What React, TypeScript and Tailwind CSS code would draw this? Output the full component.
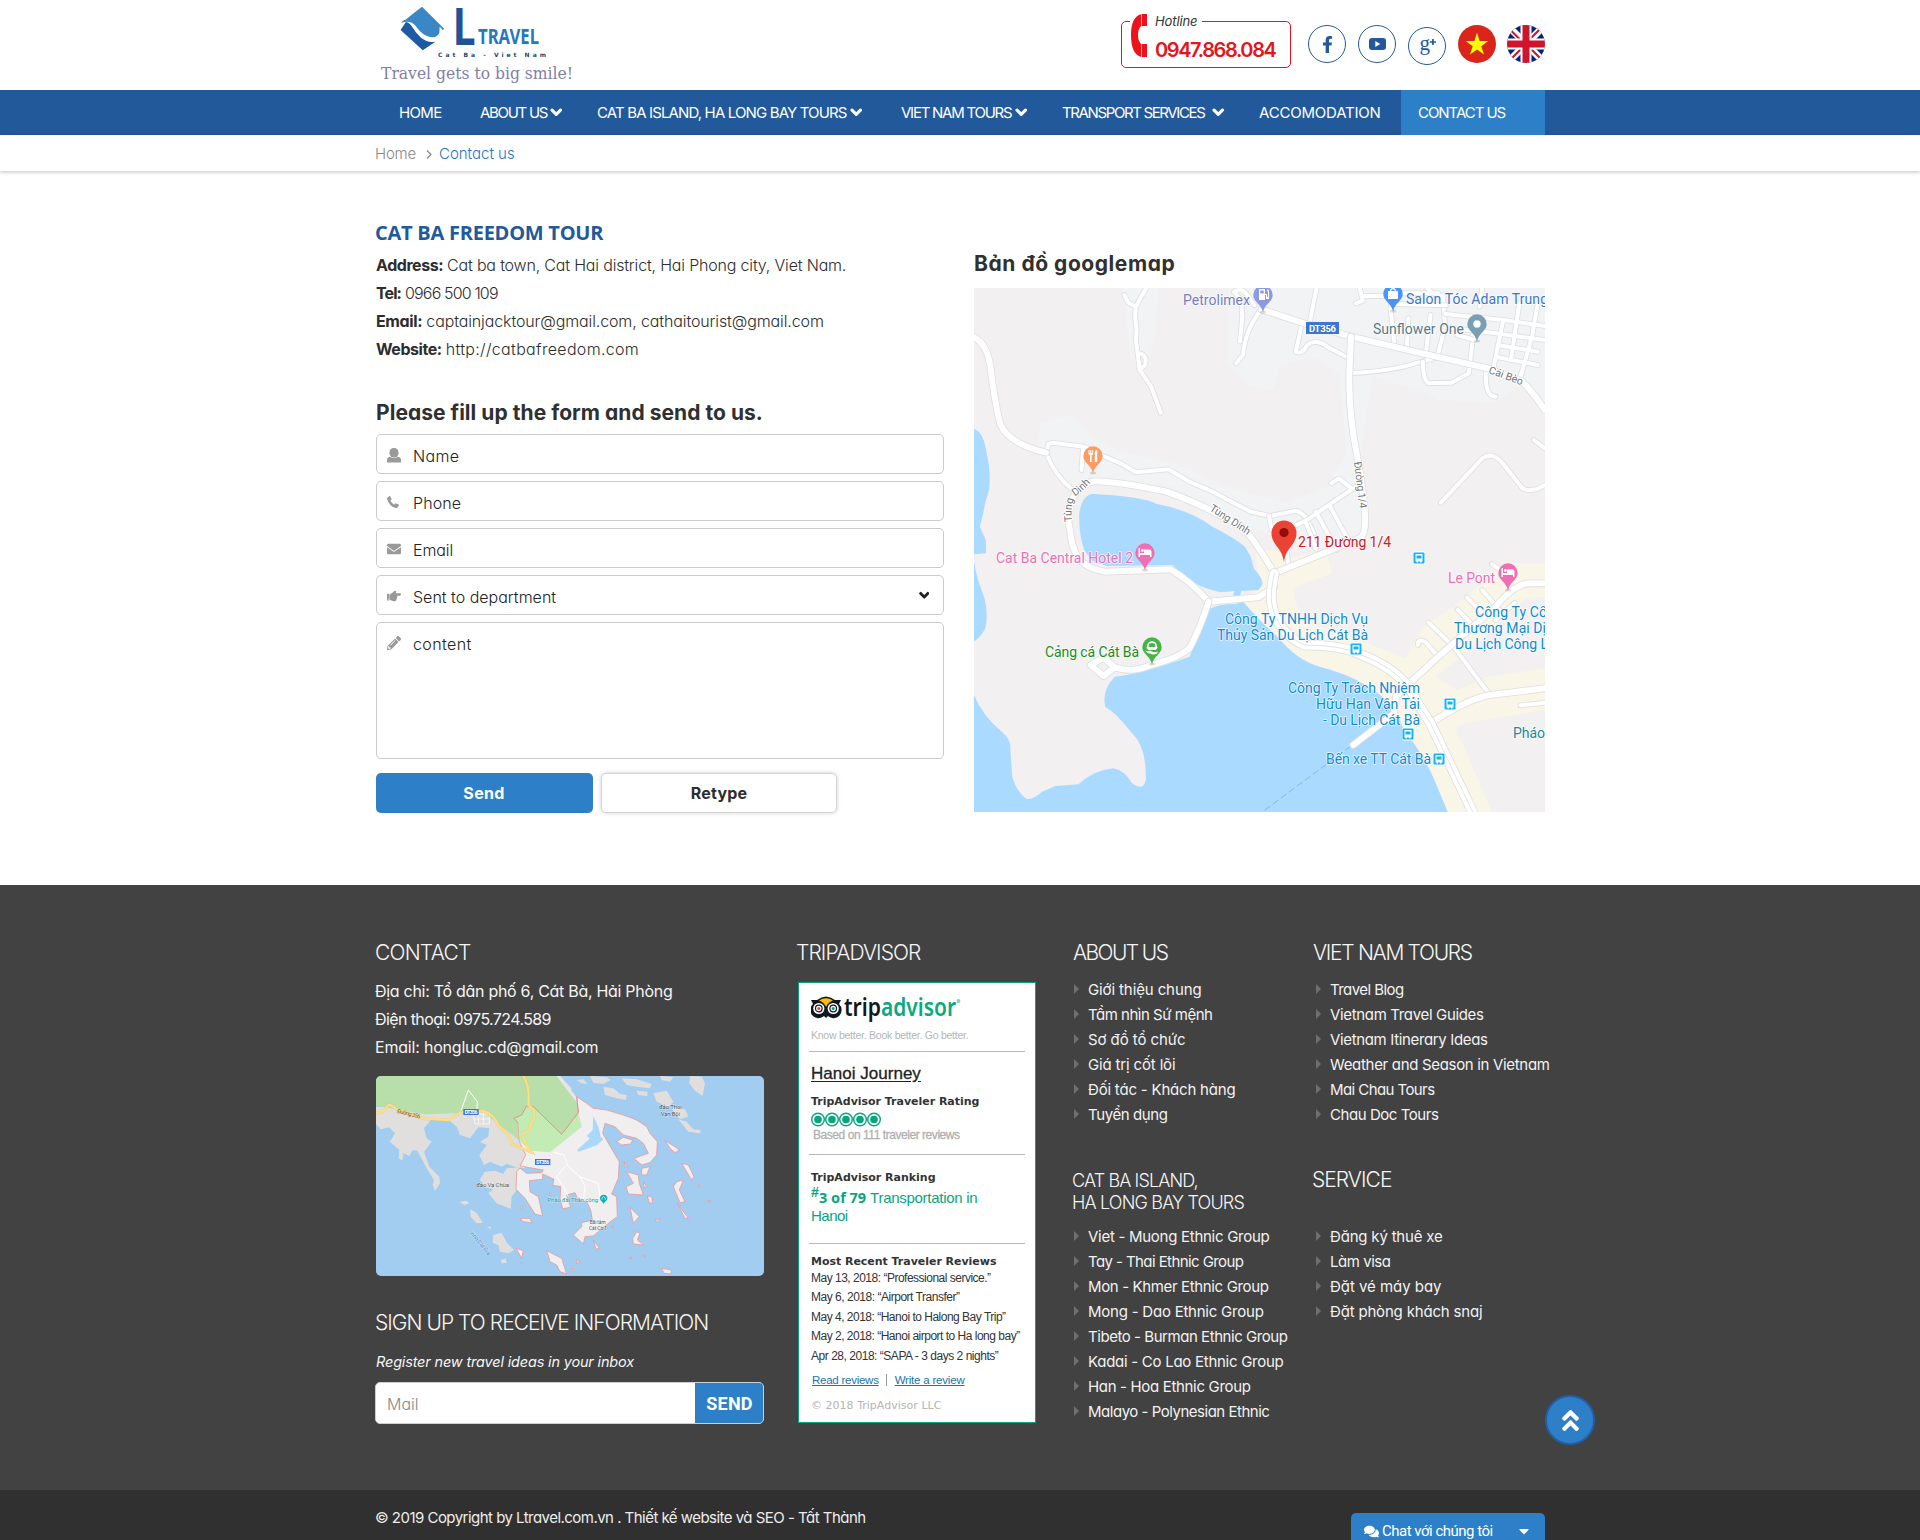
import type { ReactNode } from "react";
import {
  FaAngleDoubleUp,
  FaCaretDown,
  FaChevronDown,
  FaComments,
  FaEnvelope,
  FaFacebookF,
  FaHandPointRight,
  FaPencilAlt,
  FaPhoneAlt,
} from "react-icons/fa";

type Item = [text: string, tracking: string];

/* ---------- header ---------- */

function Logo() {
  return (
    <svg width="200" height="90" viewBox="375 0 200 90">
      <g transform="translate(360 0) scale(.3827 .3333)">
        <path fill="#3a87c6" d="M116 62 Q128 50 162 20 L220 86 L216 91 Q206 74 208 86 Q210 112 186 112 Q164 108 148 82 Q136 58 108 68 Q112 58 130 56Z" />
        <path fill="#1e5aa4" d="M120 66 L106 90 L164 151 L197 125 Q176 130 158 112 Q144 96 137 82 Q130 68 120 66Z" />
      </g>
      <text x="454" y="45" fontFamily="Roboto" fontSize="51" fontWeight="800" fill="#1f5297" textLength="21" lengthAdjust="spacingAndGlyphs">L</text>
      <text x="478" y="44" fontFamily="Noto Sans" fontSize="21.500" fontWeight="700" fill="#2479bd" textLength="61" lengthAdjust="spacingAndGlyphs">TRAVEL</text>
      <text x="438" y="57" fontFamily="DejaVu Sans" fontSize="6" fontWeight="700" fill="#27486b" textLength="108">Cat Ba - Viet Nam</text>
      <text x="381" y="79" fontFamily="DejaVu Serif" fontSize="17.500" fill="#8080a6" textLength="192" lengthAdjust="spacingAndGlyphs">Travel gets to big smile!</text>
    </svg>
  );
}

function Round({ children, className = "" }: { children: ReactNode; className?: string }) {
  return (
    <a className={`flex size-[38px] items-center justify-center rounded-full border border-[#23599b] text-[#23599b] ${className}`}>{children}</a>
  );
}

function Header() {
  return (
    <header className="h-[90px] bg-white">
      <div className="mx-auto flex h-full w-[1170px] items-start justify-between">
        <Logo />
        <div className="flex items-start pt-[21px]">
          <div className="relative h-[47px] w-[170px] rounded-[5px] border border-[#e6141b]">
            <svg className="absolute -top-2 left-2 bg-white" width="18" height="43" viewBox="-1 0 18 43">
              <path fill="#ee121b" d="M16 0 H11 Q0 2 0 21 Q0 41 11 43 H16 V30 H10 Q7 27 7 21 Q7 15 10 12 H16Z" />
              <path stroke="#fff" strokeWidth=".6" d="M10.500 0V12M10.500 30V43" />
            </svg>
            <span className="absolute -top-[11px] left-[26px] w-[54px] bg-white pl-[7px] text-[13px] leading-[20px] tracking-[-0.1px] text-[#333] italic">Hotline</span>
            <span className="absolute top-[17px] left-[33px] text-[20px] leading-[22px] font-semibold tracking-[-1.4px] text-[#e6141b]">0947.868.084</span>
          </div>
          <div className="ml-[17px] flex gap-3 pt-1">
            <Round><FaFacebookF size={17} /></Round>
            <Round>
              <svg width="17" height="12" viewBox="0 0 17 12">
                <rect width="17" height="12" rx="3" fill="currentColor" />
                <path fill="#fff" d="M6.300 3v6l5-3z" />
              </svg>
            </Round>
            <Round className="mt-[2px]">
              <svg width="20" height="20" viewBox="0 0 20 20">
                <text x="2.500" y="14" fontFamily="Liberation Serif" fontSize="21" fill="currentColor">g</text>
                <path stroke="currentColor" strokeWidth="1.700" d="M12.800 6h6.200M15.900 2.900v6.200" />
              </svg>
            </Round>
            <svg width="38" height="38" viewBox="0 0 38 38">
              <circle cx="19" cy="19" r="19" fill="#da251d" />
              <path fill="#ff0" d="M19 7.500 21.600 16h8.700l-7 5.200 2.700 8.400-7-5.200-7 5.200 2.700-8.400-7-5.200h8.700z" />
            </svg>
            <svg className="-ml-px" width="38" height="38" viewBox="0 0 38 38">
              <clipPath id="uk"><circle cx="19" cy="19" r="19" /></clipPath>
              <g clipPath="url(#uk)">
                <path fill="#00247d" d="M0 0h38v38H0z" />
                <path stroke="#fff" strokeWidth="7" d="M0 0 38 38M38 0 0 38" />
                <path stroke="#cf142b" strokeWidth="2" d="M0 1.500 19 20.500M19 19l19 19M38 -1 19 18M19 19 0 38" />
                <path stroke="#fff" strokeWidth="11" d="M19 0v38M0 19h38" />
                <path stroke="#cf142b" strokeWidth="7" d="M19 0v38M0 19h38" />
              </g>
            </svg>
          </div>
        </div>
      </div>
    </header>
  );
}

const NAV: [text: string, box: string, tracking: string, chevron: string][] = [
  ["HOME", "w-[81px]", "tracking-[-0.67px]", ""],
  ["ABOUT US", "w-[117px]", "tracking-[-1.3px]", "ml-[3px]"],
  ["CAT BA ISLAND, HA LONG BAY TOURS", "w-[304px]", "tracking-[-0.86px]", "ml-[3px]"],
  ["VIET NAM TOURS", "w-[161px]", "tracking-[-1.25px]", "ml-[4px]"],
  ["TRANSPORT SERVICES", "w-[197px]", "tracking-[-1.38px]", "ml-[8px]"],
  ["ACCOMODATION", "w-[142px]", "tracking-[-0.2px]", ""],
];

function Nav() {
  return (
    <nav className="h-[45px] bg-[#22599a]">
      <div className="mx-auto flex h-full w-[1170px] pl-6 text-[15px] leading-[45px] whitespace-nowrap text-white">
        {NAV.map(([text, box, tracking, chevron]) => (
          <a key={text} className={`flex shrink-0 items-center ${box}`}>
            <span className={tracking}>{text}</span>
            {chevron && <FaChevronDown className={`${chevron} stroke-white stroke-[45]`} size={12.5} />}
          </a>
        ))}
        <a className="flex-1 bg-[#2d7fc7] pl-[17px] tracking-[-1.05px]">CONTACT US</a>
      </div>
    </nav>
  );
}

/* ---------- contact form ---------- */

function Field({ icon, label, tracking, className = "h-10", children }: { icon: ReactNode; label: string; tracking: string; className?: string; children?: ReactNode }) {
  return (
    <div className={`flex rounded-[5px] border border-[#cbcbcb] bg-white pr-3.5 ${className}`}>
      <span className="ml-2.5 flex h-10 w-[26px] items-center text-[#999]">{icon}</span>
      <span className={`flex-1 text-[16px] leading-[42px] font-light text-[#222] ${tracking}`}>{label}</span>
      {children}
    </div>
  );
}

function UserIcon() {
  return (
    <svg width="14" height="15" viewBox="0 0 14 15" fill="currentColor">
      <rect x="2.500" width="9" height="9.500" rx="4.200" />
      <path d="M0 14.500V12q0-2.700 3-3.200 4 2.500 8 0 3 .5 3 3.200v2.500z" />
    </svg>
  );
}

function HandsetIcon() {
  return (
    <svg width="12" height="12" viewBox="0 0 12 12" fill="currentColor">
      <path d="M.3 1.700 2.500.1q.6-.3.9.3L4.500 2.900q.2.5-.2.800L3.300 4.600Q4.600 7.300 7.400 8.700L8.300 7.600q.3-.4.800-.200L11.600 8.600q.6.300.3.900L10.300 11.700Q9.900 12.200 9 12 2.200 10.500.1 3 0 2 .3 1.700Z" />
    </svg>
  );
}

const INFO: [string, string, string, string][] = [
  ["Address:", "tracking-[-0.45px]", "Cat ba town, Cat Hai district, Hai Phong city, Viet Nam.", "tracking-[-0.18px]"],
  ["Tel:", "tracking-[-0.9px]", "0966 500 109", "tracking-[-0.85px]"],
  ["Email:", "tracking-[-0.35px]", "captainjacktour@gmail.com, cathaitourist@gmail.com", "tracking-[-0.12px]"],
  ["Website:", "tracking-[-0.45px]", "http://catbafreedom.com", "tracking-[0.32px]"],
];

function ContactForm() {
  return (
    <section className="box-content w-[568px] pt-12 pl-px">
      <h1 className="-ml-px font-['Open_Sans',sans-serif] text-[20px] leading-[28px] font-bold tracking-[-0.25px] text-[#22599a]">CAT BA FREEDOM TOUR</h1>
      <div className="mt-[4px] text-[16px] leading-7 whitespace-nowrap text-[#2d2d2d]">
        {INFO.map(([label, lt, value, vt]) => (
          <p key={label} className="flex gap-[4px]">
            <b className={lt}>{label}</b>
            <span className={`font-light ${vt}`}>{value}</span>
          </p>
        ))}
      </div>
      <h2 className="mt-[35px] text-[21px] leading-[29px] font-bold tracking-[0.04px] whitespace-nowrap text-[#303030]">Please fill up the form and send to us.</h2>
      <form className="mt-[7px] flex flex-col gap-[7px]">
        <Field icon={<UserIcon />} label="Name" tracking="tracking-[0.3px]" />
        <Field icon={<HandsetIcon />} label="Phone" tracking="tracking-[0.1px]" />
        <Field icon={<FaEnvelope size={14} />} label="Email" tracking="tracking-[-0.1px]" />
        <Field icon={<FaHandPointRight size={14} />} label="Sent to department" tracking="tracking-normal">
          <FaChevronDown className="mt-[14px] stroke-[#222] stroke-[60] text-[#222]" size={10.5} />
        </Field>
        <Field icon={<FaPencilAlt size={14} />} label="content" tracking="tracking-[0.4px]" className="h-[137px]" />
        <div className="mt-[7px] flex h-10 gap-2 text-[16px] leading-[41px] font-bold">
          <button type="button" className="w-[217px] rounded-[5px] bg-[#2d7fc7] pr-px tracking-[0.3px] text-white">Send</button>
          <button type="button" className="w-[236px] rounded-[5px] border border-[#d4d4d4] bg-white leading-[39px] tracking-[0.2px] text-[#2d2d2d] shadow-[0_0_4px_rgba(0,0,0,0.18)]">Retype</button>
        </div>
      </form>
    </section>
  );
}

/* ---------- street map ---------- */

const MINOR_ROADS = [
  "M430 165 440 188 460 200 487 144M460 200 458 230 462 270 460 300 470 390 500 440 525 518M470 340Q490 345 484 375L470 390",
  "M720 160 735 180 738 230 732 305M716 156Q730 144 745 156L770 195M788 208Q745 270 740 345L722 370",
  "M932 144 914 250M893 255 878 335Q893 345 908 315Q930 295 960 320L1022 358M1018 400Q1100 395 1160 380L1245 353",
  "M1210 365Q1210 420 1225 430L1285 428 1330 400 1342 280M1375 385Q1370 470 1400 470",
  "M1045 144 1053 182 1035 190M1053 168H1130M1130 160H1250M1222 144 1235 160 1262 168 1268 260 1248 348M1125 200 1135 310M1172 235 1168 325M1230 225 1218 335",
  "M1130 192 1270 196M1268 222 1420 240 1529 258M1268 262 1400 280 1529 300M1300 285 1345 300M1420 240 1395 380M1462 190 1440 360M1510 190 1495 290 1465 410M1405 315 1510 335M1400 350 1510 375M1365 144 1358 200",
  "M1257 788 1365 655Q1390 635 1415 665L1470 745Q1495 760 1529 735M1500 600 1529 625",
  "M225 638 232 612 242 608 325 620 375 648 420 670 460 697 545 688 600 725 660 755 760 815 810 828 880 812Q905 825 912 850L925 880M322 620 318 690M225 638Q250 710 295 750",
  "M880 855 910 838 970 790 1035 740M970 730 990 715 1020 742M808 828 815 870M930 815 985 930M965 795 1020 910M905 850 930 925M850 900 860 985",
  "M1250 1250 1215 1205Q1195 1195 1197 1215M1225 1148 1290 1220M1300 1108 1340 1155M1325 1072 1370 1125M1365 1050 1410 1110M1390 972 1440 1010M1400 1140 1450 1088",
  "M1290 1220 1385 1365M1465 1396 1529 1388",
];

const MAIN_ROADS = [
  "M37 292Q70 310 80 380Q90 480 105 550Q125 610 225 638",
  "M288 870Q278 830 290 790Q305 735 350 724Q400 722 540 755Q650 800 740 865Q765 890 822 1000M288 870Q290 910 305 945Q325 985 380 995L550 988Q600 1020 650 1085L780 1072 822 1040",
  "M788 208 900 250 1022 290 1245 350 1380 385 1470 425Q1500 460 1529 510",
  "M822 1000 950 940 1045 895Q1065 880 1057 800Q1052 740 1040 660Q1015 520 1018 400L1022 290",
  "M650 1085Q630 1160 600 1225Q570 1255 500 1275Q450 1300 405 1282L375 1253 342 1275 375 1308 405 1282",
  "M1170 1335 1250 1250 1400 1100Q1450 1030 1490 1030H1529M1230 1450Q1320 1380 1385 1365L1529 1345",
  "M1170 1335 1140 1370 1135 1420 1028 1515",
];

const COAST_ROAD = "M822 1000Q810 1060 815 1090Q830 1180 900 1215Q1000 1215 1050 1245Q1130 1280 1172 1340Q1200 1400 1230 1450L1340 1716";

function Road({ d, width }: { d: string; width: number }) {
  return (
    <>
      <path d={d} stroke="#dddedf" strokeWidth={width + 1.6} />
      <path d={d} stroke="#fff" strokeWidth={width} />
    </>
  );
}

function Pin({ x, y, color, kind }: { x: number; y: number; color: string; kind: "fuel" | "shop" | "dot" | "food" | "bed" | "boat" }) {
  return (
    <g transform={`translate(${x} ${y})`}>
      <ellipse cy="17" rx="3" ry="1.500" fill="#0002" />
      <path fill={color} d="M0 17.500C-1.500 9-9.700 7-9.700 0A9.700 9.700 0 0 1 9.700 0C9.700 7 1.500 9 0 17.500Z" />
      {kind === "fuel" && <path fill="#fff" fillRule="evenodd" d="M-4-6h6v5h2v3h1v-5l-1-2 1-1 1 2v8h-3v-4H2v5h-6zM-2.700-4.500v3h3.400v-3z" />}
      {kind === "shop" && <path fill="#fff" fillRule="evenodd" d="M-5-3h2q0-3 3-3t3 3h2v8H-5zM-1.800-3h3.600q0-1.700-1.800-1.700T-1.800-3z" />}
      {kind === "dot" && <circle r="3.700" fill="#fff" />}
      {kind === "food" && <path fill="#fff" d="M-4.500-6h1v3h.8v-3h1v3h.8v-3h1v4l-1.500 1.500V6h-1.600V-.5L-4.500-2zM1.800 6v-10q.5-2 2.400-2V6z" />}
      {kind === "bed" && <path fill="#fff" d="M-6.500-5h1.500v5h4v-3.500h5.500q2 0 2 2V4H5V2H-5v2h-1.500zM-4-2.500a1.400 1.400 0 1 0 2.800 0 1.400 1.400 0 1 0-2.800 0" />}
      {kind === "boat" && <path fill="#fff" fillRule="evenodd" d="M-5.500 1-4-4q4-4 8 0l1.500 5-2 2h-7zM-3-3-3.500 0h7L3-3Q0-5-3-3zM-7 3.500q3 1 5 0 4 3 8 1l-1 2q-4 2-7 0-3 0-5-3z" />}
    </g>
  );
}

function BusStop({ x, y }: { x: number; y: number }) {
  return (
    <g transform={`translate(${x} ${y})`}>
      <rect x="-6" y="-6.500" width="12" height="13" rx="1.500" fill="#fff" />
      <rect x="-5.500" y="-5.500" width="11" height="11" rx="1" fill="#12b5f5" />
      <path fill="#fff" fillRule="evenodd" d="M-3.500-4h7v7.500h-1v1h-1.500v-1h-2v1h-1.500v-1h-1zM-2.500-2.500v3h5v-3z" />
    </g>
  );
}

const BLUE = "#0d8bd1";
const PLACES: [text: string, x: number, y: number, width: number, color: string][] = [
  ["Petrolimex", 209, 17, 67, "#757cc0"],
  ["Salon Tóc Adam Trung", 432, 16, 142, "#3a76c8"],
  ["Sunflower One", 399, 46, 91, "#577988"],
  ["211 Đường 1/4", 324, 259, 93, "#c5201c"],
  ["Cat Ba Central Hotel 2", 22, 275, 137, "#ee6fb3"],
  ["Cảng cá Cát Bà", 71, 369, 94, "#1e8a22"],
  ["Công Ty TNHH Dịch Vụ", 251, 336, 143, BLUE],
  ["Thủy Sản Du Lịch Cát Bà", 243, 352, 151, BLUE],
  ["Le Pont", 474, 295, 47, "#ee6fb3"],
  ["Công Ty Cổ", 501, 329, 72, BLUE],
  ["Thương Mại Dị", 480, 345, 92, BLUE],
  ["Du Lịch Công L", 481, 361, 93, BLUE],
  ["Công Ty Trách Nhiệm", 314, 405, 132, BLUE],
  ["Hữu Hạn Vận Tải", 342, 421, 104, BLUE],
  ["- Du Lịch Cát Bà", 349, 437, 97, BLUE],
  ["Pháo", 539, 450, 32, "#178a9c"],
  ["Bến xe TT Cát Bà", 352, 476, 105, BLUE],
];

function StreetMap() {
  return (
    <div className="relative h-[524px] w-[571px] overflow-hidden bg-[#f2f0f1]">
      <svg width="571" height="524" viewBox="37 144 1492 1572" preserveAspectRatio="none" fill="none" strokeLinejoin="round" strokeLinecap="round">
        <path fill="#f1f3f5" d="M425 144H520L510 300 480 380 445 350ZM700 144H950L1030 144H1529V520L1470 430 1400 490 1250 480 1220 460 1080 410 1050 620 1065 880 960 930 800 880 700 830 560 740 420 720 330 740 290 760 200 630 210 550 290 525 350 590 430 640 560 670 700 740 850 790 960 740 1010 640 990 400 930 350 840 370 820 450 760 440 700 370Z" />
        <path fill="#f9f5e7" d="M775 930H830L860 955 955 930 973 1000 870 1045Q880 1110 900 1150L1000 1180 1165 1255 1210 1160 1290 1100 1390 1005 1430 970H1529V1070L1480 1075 1330 1230 1245 1310 1300 1350 1380 1310 1529 1285V1410L1320 1450Q1280 1470 1310 1500L1390 1716H1270L1100 1400 900 1300 730 1085 780 1050Z" />
        <path fill="#aadaff" d="M37 567Q62 575 70 640Q82 700 76 750L66 790Q62 820 52 860L68 900 68 940 37 943ZM37 963Q45 1020 60 1060Q75 1110 68 1160Q60 1185 37 1205Z" />
        <path fill="#aadaff" d="M350 762Q480 770 515 792Q600 810 660 860Q720 895 745 920L760 950 768 985Q795 1020 790 1035L780 1050 735 1053 732 1070H714L717 1053 680 1057Q620 1040 590 1010L555 975 385 978 345 962 325 930Q310 880 312 820Q320 762 350 762Z" />
        <path fill="#aadaff" d="M655 1105Q680 1092 720 1092L740 1085Q790 1150 830 1190Q880 1260 940 1280Q1010 1300 1060 1335Q1110 1370 1140 1410L1160 1470Q1210 1540 1240 1620L1275 1716H37V1365Q60 1430 110 1475Q135 1500 132 1530L137 1610Q150 1660 175 1677Q190 1680 215 1655L250 1638 310 1633Q350 1590 400 1585Q430 1590 450 1630Q480 1655 486 1620Q488 1520 450 1480Q410 1420 380 1400Q370 1350 405 1310Q480 1300 600 1250Q620 1200 630 1150Z" />
        <path stroke="#86b4ee" strokeDasharray="6 4" strokeWidth="1" vectorEffect="non-scaling-stroke" d="M1020 1520 790 1716" />
        <g className="[&_path]:[vector-effect:non-scaling-stroke]">
          {MINOR_ROADS.map((d) => <Road key={d} d={d} width={4} />)}
          {MAIN_ROADS.map((d) => <Road key={d} d={d} width={6} />)}
          <Road d={COAST_ROAD} width={9} />
          <path d={COAST_ROAD} stroke="#e3e3e3" strokeWidth="1" />
        </g>
      </svg>
      <svg className="absolute inset-0 font-['Roboto',sans-serif]" width="571" height="524" viewBox="0 0 571 524">
        <rect x="332" y="34" width="33" height="12" fill="#3a77cd" />
        <text x="335" y="43.500" fontSize="9.500" fontWeight="700" fill="#fff" textLength="27">DT356</text>
        <g fontSize="10.500" fill="#757575" stroke="#fff" strokeWidth="2" paintOrder="stroke" strokeLinejoin="round">
          <text transform="translate(514 85) rotate(20)">Cái Bèo</text>
          <text transform="translate(235 222) rotate(33)" textLength="46">Tùng Dinh</text>
          <text transform="translate(380 174) rotate(83)" textLength="47">Đường 1/4</text>
          <path id="bend" fill="none" stroke="none" d="M98 234Q96 212 103 207T118 193" />
          <text><textPath href="#bend">Tùng Dinh</textPath></text>
        </g>
        <g fontSize="14" stroke="#fff" strokeOpacity=".8" strokeWidth="1.600" paintOrder="stroke" strokeLinejoin="round">
          {PLACES.map(([text, x, y, width, color]) => (
            <text key={text} x={x} y={y + 0.4} fill={color} textLength={width}>{text}</text>
          ))}
        </g>
        <Pin x={289} y={7} color="#8f99e0" kind="fuel" />
        <Pin x={419} y={6} color="#4a94f7" kind="shop" />
        <Pin x={503} y={36} color="#7a9fb2" kind="dot" />
        <Pin x={119} y={168} color="#fc9b62" kind="food" />
        <Pin x={171} y={265} color="#ee6fb3" kind="bed" />
        <Pin x={534} y={285} color="#ee6fb3" kind="bed" />
        <Pin x={178} y={359} color="#48b34a" kind="boat" />
        <path fill="#ea4335" d="M310 274C308 259 297.500 257 297.500 245A12.500 12.500 0 0 1 322.500 245C322.500 257 312 259 310 274Z" />
        <circle cx="310" cy="244.500" r="4.600" fill="#960a0a" />
        <BusStop x={382} y={361} />
        <BusStop x={445} y={270} />
        <BusStop x={476} y={416} />
        <BusStop x={434} y={446} />
        <BusStop x={465} y={471} />
      </svg>
    </div>
  );
}

/* ---------- island map ---------- */

function IslandMap() {
  return (
    <svg className="mt-[15px] ml-px rounded-[5px] bg-[#a2cdf1]" width="388" height="200" viewBox="48 468 1164 600" fontFamily="Roboto, sans-serif">
      <g fill="#e1dfdd">
        <path d="M48 560 75 562 200 583 300 570 400 575 480 665 500 690 495 745 470 742 440 732 425 740 390 725 372 735 358 705 380 675 360 665 385 650 388 625 355 622 330 655 300 645 290 620 262 597 215 598 192 625 200 655 215 665 192 695 208 740 238 770 240 790 225 812 218 795 222 780 200 745 172 692 158 690 148 708 130 700 128 722 116 715 118 690 90 665 105 640 88 622 62 628 48 612Z" />
        <path d="M478 742 440 745 430 762 405 752 375 755 360 778 370 800 400 808 385 820 410 850 452 866 455 830 470 810Z" />
        <path d="M298 845 320 842 328 850 312 855ZM330 868 350 878 368 908 350 910 332 890ZM400 945 425 938 440 968 462 990 445 1000 420 995 415 975 398 968ZM422 1020 438 1015 440 1028 425 1030ZM380 922 392 920 394 928Z" />
        <path d="M590 468 600 468 635 505 632 520ZM650 480 670 478 682 492 665 490ZM690 468 740 472 752 480 730 492 700 488ZM730 500 760 505 780 522 800 525 798 540 770 535 735 525ZM785 475 830 478 875 492 870 505 830 500 800 495ZM830 512 862 515 862 528 835 525ZM900 468 940 472 930 485 905 480ZM990 468 1025 470 1035 490 1028 528 1005 512 988 490ZM880 520 920 512 940 545 925 560 890 545ZM930 560 975 568 985 590 960 598ZM955 598 980 605 1000 628 1022 630 1020 640 985 635Z" />
      </g>
      <path fill="#e9e7e5" d="M590 468H600L660 545 662 575 650 560Z" />
      <path fill="#b8dfa9" d="M48 468H590L660 560 665 620 570 697 515 692 470 655 370 577 200 583 75 562 48 558Z" />
      <g fill="#f0eeee" stroke="#e89a9a" strokeWidth="2.500" strokeLinejoin="round">
        <path d="M500 558 520 560 605 643 655 578 650 530 680 550 700 565 740 570 790 585 830 600 860 620 870 640 892 665 890 705 870 728 845 735 822 715 865 700 850 670 830 655 790 645 765 620 735 610 728 640 770 712 778 725 775 775 755 822 770 830 772 890 755 902 715 935 700 948 675 950 670 972 640 945 665 920 665 908 697 900 692 870 680 845 655 842 645 818 620 825 632 862 608 866 600 838 602 800 578 796 582 778 548 762 548 778 508 782 510 815 535 830 548 888 525 882 495 835 468 808 470 755 480 744 500 760 545 758 550 750 480 738 497 705 478 665 475 610 462 595 485 585Z" />
        <path d="M770 665 790 652 818 660 812 672 785 675ZM915 662 945 680 958 690 945 698 930 685ZM845 745 870 740 860 765 845 765ZM800 755 835 765 838 790 850 825 805 822 798 800 820 790ZM965 730 985 735 1002 770 995 780 980 755ZM950 785 970 780 958 810 975 845 960 848 940 800ZM952 850 985 895 975 895ZM810 862 838 890 820 910ZM862 828 875 830 878 850 868 848ZM830 935 840 940 832 960 852 975 820 972 818 955ZM700 960 718 985 708 988ZM480 895 510 895 515 908 490 905ZM560 992 605 1015 620 1062 600 1055 590 1035 570 1025ZM468 985 490 992 485 1015ZM905 1045 935 1050 932 1062 912 1060ZM885 900 900 895 892 905ZM850 785 860 800 852 802ZM792 725 802 740 796 742ZM650 1020 660 1025 650 1030ZM635 1045 645 1052 638 1055ZM1015 795 1022 798 1018 802ZM1045 840 1052 844 1046 846ZM568 818 575 822 570 828ZM852 1005 858 1009 853 1011ZM808 1012 817 1014 809 1017ZM755 918 762 922 757 924ZM484 1025V1033M480 862 490 860 484 868Z" />
      </g>
      <path fill="#c3ecb4" d="M500 558 520 560 605 643 655 578 665 620 570 697 515 692 480 665 475 610 462 595 485 585Z" />
      <path fill="none" stroke="#e08d86" strokeWidth="2.500" d="M475 610 462 595 485 585 500 558 520 560 605 643 655 578 650 530" />
      <path fill="#a8d8fa" d="M700 588 715 620 722 650 730 658 712 675 655 695 652 690 690 655 680 648 698 630Z" />
      <g fill="none" stroke="#fff" strokeWidth="3">
        <path d="M303 572 325 510 352 545 350 575M520 700V715M580 697 612 705 625 740 660 770 715 790 720 830M620 735 590 770 610 800 625 830M660 770 675 800 670 840" />
        <path strokeWidth="2" d="M340 582H388V612H345ZM355 582V612M370 582V612M340 597H390" />
      </g>
      <path fill="none" stroke="#c9a94f" strokeWidth="9" strokeLinecap="round" d="M48 580Q75 578 80 562T110 568L190 596 265 600 303 577 370 573Q400 580 418 620Q450 640 455 672L515 697Q480 650 490 640Q515 635 510 615Q530 590 520 568L505 555Q510 500 490 468" opacity=".3" />
      <path fill="none" stroke="#ffdd82" strokeWidth="7" strokeLinecap="round" d="M48 580Q75 578 80 562T110 568L190 596 265 600 303 577 370 573Q400 580 418 620Q450 640 455 672L515 697Q480 650 490 640Q515 635 510 615Q530 590 520 568L505 555Q510 500 490 468" />
      <rect x="310" y="567" width="46" height="18" fill="#3b78cd" />
      <rect x="525" y="717" width="46" height="18" fill="#3b78cd" />
      <g fontSize="15" fontWeight="700" fill="#fff">
        <text x="314" y="582" textLength="38">DT356</text>
        <text x="529" y="732" textLength="38">DT356</text>
      </g>
      <text transform="translate(110 578) rotate(14)" fontSize="17" fill="#8a5a2a" textLength="72">Đường 356</text>
      <g fontSize="18" fill="#555" stroke="#fff" strokeOpacity=".4" strokeWidth="3" paintOrder="stroke">
        <text x="349" y="801" textLength="98">đảo Vạ Chùa</text>
        <text x="897" y="567" textLength="68">đảo Thoi</text>
        <text x="902" y="587" textLength="58">Vạn Bội</text>
        <text x="689" y="911" textLength="48" fontSize="15">Bãi tắm</text>
        <text x="687" y="929" textLength="54" fontSize="15">Cát Cò 1</text>
        <text x="562" y="847" textLength="152" fill="#2c9ba0">Pháo đài Thần công</text>
        <text transform="translate(330 940) rotate(51)" textLength="86" fontSize="17" fill="#4f82c4">vịnh Cát Gia</text>
      </g>
      <path fill="#12aebc" d="M731 853C729 845 720 844 720 835a11 11 0 0 1 22 0c0 9-9 10-11 18z" />
      <path stroke="#fff" strokeWidth="2" d="M726 839v-5l5-4 5 4v5" fill="none" />
    </svg>
  );
}

/* ---------- TripAdvisor card ---------- */

function OwlLogo() {
  return (
    <svg width="156" height="30" viewBox="0 0 156 30" fontFamily="Noto Sans, sans-serif">
      <path fill="#111820" d="M0 5H6Q15-2 24 5H30L28 9A8 8 0 0 1 17 21L15 23 13 21A8 8 0 0 1 2 9Z" />
      <path fill="#fbbd0e" d="M8 5.500Q15 1 22 5.500Q17 7 15 12Q13 7 8 5.500Z" />
      <circle cx="7.800" cy="13.500" r="5.600" fill="#fff" />
      <circle cx="22.200" cy="13.500" r="5.600" fill="#fff" />
      <g fill="none" stroke="#111820" strokeWidth="1.200">
        <circle cx="7.800" cy="13.500" r="3.300" />
        <circle cx="22.200" cy="13.500" r="3.300" />
      </g>
      <circle cx="7.800" cy="13.500" r="1.500" fill="#e5432f" />
      <circle cx="22.200" cy="13.500" r="1.500" fill="#00a57c" />
      <text x="33" y="20.500" fontSize="24.500" fontWeight="600" fill="#111820" textLength="37" lengthAdjust="spacingAndGlyphs">trip</text>
      <text x="70" y="20.500" fontSize="24.500" fontWeight="600" fill="#0aaa80" textLength="75" lengthAdjust="spacingAndGlyphs">advisor</text>
      <circle cx="147.500" cy="6" r="1.900" fill="#7fd3bb" />
    </svg>
  );
}

const REVIEWS: Item[] = [
  ["May 13, 2018: “Professional service.”", "tracking-[-0.5px]"],
  ["May 6, 2018: “Airport Transfer”", "tracking-[-0.48px]"],
  ["May 4, 2018: “Hanoi to Halong Bay Trip”", "tracking-[-0.5px]"],
  ["May 2, 2018: “Hanoi airport to Ha long bay”", "tracking-[-0.5px]"],
  ["Apr 28, 2018: “SAPA - 3 days 2 nights”", "tracking-[-0.47px]"],
];

function Rule({ className }: { className: string }) {
  return <div className={`-ml-0.5 h-px w-[216px] bg-[#b9b9b9] ${className}`} />;
}

function TripAdvisor() {
  return (
    <div className="mt-[15px] ml-px h-[441px] w-[238px] border border-[#05a67e] bg-white pt-3 pl-3 font-['Liberation_Sans',sans-serif] whitespace-nowrap text-[#333]">
      <OwlLogo />
      <p className="mt-[3px] text-[10.5px] leading-[14px] tracking-[-0.25px] text-[#b5b5b5]">Know better. Book better. Go better.</p>
      <Rule className="mt-[9px]" />
      <p className="mt-3 text-[17px] leading-5 tracking-[0.02px] text-[#222] underline underline-offset-2 [-webkit-text-stroke:0.3px]">Hanoi Journey</p>
      <p className="mt-[11px] font-['DejaVu_Sans',sans-serif] text-[11px] leading-[14px] font-bold tracking-[-0.02px]">TripAdvisor Traveler Rating</p>
      <svg className="mt-[3px]" width="70" height="15" viewBox="0 0 70 15">
        {[0, 1, 2, 3, 4].map((i) => (
          <g key={i}>
            <circle cx={7 + i * 14} cy="7.500" r="6.300" fill="#fff" stroke="#05a67e" strokeWidth="1.400" />
            <circle cx={7 + i * 14} cy="7.500" r="3.800" fill="#05a67e" />
          </g>
        ))}
      </svg>
      <p className="mt-px ml-0.5 text-[12px] leading-[14px] tracking-[-0.45px] text-[#b0b0b0] [-webkit-text-stroke:0.3px]">Based on 111 traveler reviews</p>
      <Rule className="mt-3" />
      <p className="mt-4 font-['DejaVu_Sans',sans-serif] text-[11px] leading-[14px] font-bold">TripAdvisor Ranking</p>
      <p className="mt-1 text-[15px] leading-[18px] text-[#05a67e]">
        <span className="relative -top-1.5 inline-block w-2 text-[14px] leading-[10px] font-bold">#</span>
        <b className="font-['Noto_Sans',sans-serif] text-[14.5px] leading-[10px] tracking-[0px]">3 of 79</b>
        <span className="ml-1 tracking-[-0.28px]">Transportation in</span>
        <br />
        <span className="tracking-[-0.5px]">Hanoi</span>
      </p>
      <Rule className="mt-[18px]" />
      <p className="mt-[11px] font-['DejaVu_Sans',sans-serif] text-[11px] leading-[14px] font-bold tracking-[-0.03px]">Most Recent Traveler Reviews</p>
      {REVIEWS.map(([text, tracking]) => (
        <p key={text} className={`text-[12px] leading-[19.4px] ${tracking}`}>{text}</p>
      ))}
      <p className="mt-[7px] ml-px flex text-[11.5px] leading-[14px] text-[#1b74a5]">
        <a className="tracking-[-0.25px] underline">Read reviews</a>
        <span className="mx-[7.5px] mt-px h-3 w-px bg-[#999]" />
        <a className="tracking-[-0.2px] underline">Write a review</a>
      </p>
      <p className="mt-3 font-['DejaVu_Sans',sans-serif] text-[11px] leading-[14px] tracking-[0.02px] text-[#b5b5b5]">© 2018 TripAdvisor LLC</p>
    </div>
  );
}

/* ---------- footer ---------- */

const ABOUT: Item[] = [
  ["Giới thiệu chung", "tracking-[-0.11px]"],
  ["Tầm nhìn Sứ mệnh", "tracking-[-0.49px]"],
  ["Sơ đồ tổ chức", "tracking-[-0.07px]"],
  ["Giá trị cốt lõi", "tracking-[-0.16px]"],
  ["Đối tác - Khách hàng", "tracking-[-0.2px]"],
  ["Tuyển dụng", "tracking-[-0.4px]"],
];
const VIETNAM: Item[] = [
  ["Travel Blog", "tracking-[-0.57px]"],
  ["Vietnam Travel Guides", "tracking-[-0.34px]"],
  ["Vietnam Itinerary Ideas", "tracking-[-0.35px]"],
  ["Weather and Season in Vietnam", "tracking-[-0.32px]"],
  ["Mai Chau Tours", "tracking-[-0.58px]"],
  ["Chau Doc Tours", "tracking-[-0.44px]"],
];
const CATBA: Item[] = [
  ["Viet - Muong Ethnic Group", "tracking-[-0.28px]"],
  ["Tay - Thai Ethnic Group", "tracking-[-0.58px]"],
  ["Mon - Khmer Ethnic Group", "tracking-[-0.36px]"],
  ["Mong - Dao Ethnic Group", "tracking-[-0.23px]"],
  ["Tibeto - Burman Ethnic Group", "tracking-[-0.45px]"],
  ["Kadai - Co Lao Ethnic Group", "tracking-[-0.27px]"],
  ["Han - Hoa Ethnic Group", "tracking-[-0.33px]"],
  ["Malayo - Polynesian Ethnic", "tracking-[-0.48px]"],
];
const SERVICE: Item[] = [
  ["Đăng ký thuê xe", "tracking-[-0.19px]"],
  ["Làm visa", "tracking-[-0.46px]"],
  ["Đặt vé máy bay", "tracking-[-0.04px]"],
  ["Đặt phòng khách snaj", "tracking-[-0.18px]"],
];

function Links({ items, className }: { items: Item[]; className: string }) {
  return (
    <ul className={`text-[15px] leading-[25px] whitespace-nowrap text-[#f2f2f2] ${className}`}>
      {items.map(([text, tracking]) => (
        <li key={text} className="flex">
          <svg className="mt-[7px] mr-[9px] ml-px shrink-0" width="5" height="10" viewBox="0 0 5 10">
            <path fill="#6f6f6f" d="M0 0 5 5 0 10Z" />
          </svg>
          <span className={tracking}>{text}</span>
        </li>
      ))}
    </ul>
  );
}

function Heading({ children, className = "" }: { children: ReactNode; className?: string }) {
  return <h3 className={`text-[21px] leading-7 font-light whitespace-nowrap text-[#f5f5f5] ${className}`}>{children}</h3>;
}

function Footer() {
  return (
    <footer className="h-[605px] bg-[#424242] pt-[54px]">
      <div className="relative mx-auto flex w-[1170px]">
        <div className="w-[422px] shrink-0">
          <Heading className="tracking-[-0.77px]">CONTACT</Heading>
          <div className="mt-2.5 text-[16px] leading-7 whitespace-nowrap text-[#f5f5f5]">
            <p className="tracking-[-0.29px]">Địa chỉ: Tổ dân phố 6, Cát Bà, Hải Phòng</p>
            <p className="tracking-[-0.6px]">Điện thoại: 0975.724.589</p>
            <p className="tracking-[-0.2px]">Email: hongluc.cd@gmail.com</p>
          </div>
          <IslandMap />
          <Heading className="mt-[33px] tracking-[-0.96px]">SIGN UP TO RECEIVE INFORMATION</Heading>
          <p className="mt-[15px] ml-px text-[14.5px] leading-5 tracking-[-0.17px] whitespace-nowrap text-[#f5f5f5] italic">Register new travel ideas in your inbox</p>
          <div className="mt-2.5 flex h-[42px] w-[389px] overflow-hidden rounded-[5px] border border-[#cfcfcf] bg-white">
            <span className="flex-1 pl-[11px] text-[16px] leading-[42px] font-light text-[#888]">Mail</span>
            <button type="button" className="w-[68px] bg-[#2d7fc7] pl-px font-['Roboto',sans-serif] text-[18px] font-bold tracking-[0.2px] text-white">SEND</button>
          </div>
        </div>
        <div className="w-[276px] shrink-0">
          <Heading className="-ml-px tracking-[-0.91px]">TRIPADVISOR</Heading>
          <TripAdvisor />
        </div>
        <div className="w-[240px] shrink-0">
          <Heading className="tracking-[-1.6px]">ABOUT US</Heading>
          <Links className="mt-2.5" items={ABOUT} />
          <h3 className="mt-[43px] -ml-px text-[18px] leading-[22px] font-light whitespace-nowrap text-[#f5f5f5]">
            <span className="block tracking-[-0.88px]">CAT BA ISLAND,</span>
            <span className="block tracking-[-0.83px]">HA LONG BAY TOURS</span>
          </h3>
          <Links className="mt-2.5" items={CATBA} />
        </div>
        <div className="w-[232px] min-w-0">
          <Heading className="tracking-[-1.3px]">VIET NAM TOURS</Heading>
          <Links className="mt-2.5 ml-[2px]" items={VIETNAM} />
          <Heading className="mt-[39px] -ml-px tracking-[-0.96px]">SERVICE</Heading>
          <Links className="mt-[30px] ml-[2px]" items={SERVICE} />
        </div>
        <button type="button" className="absolute top-[456px] -right-[50px] flex size-[50px] items-center justify-center rounded-full border-2 border-[#2160a8] bg-[#2d7fc7] text-white">
          <FaAngleDoubleUp size={27} />
        </button>
      </div>
    </footer>
  );
}

export default function App() {
  return (
    <div className="h-[1540px] w-[1920px] overflow-hidden bg-white font-['Inter','Liberation_Sans',sans-serif] [font-feature-settings:'cv11']">
      <Header />
      <Nav />
      <div className="h-9 bg-white shadow-[0_1px_4px_rgba(0,0,0,0.25)]">
        <div className="mx-auto flex w-[1170px] items-center text-[15px] leading-[38px] font-light text-[#888]">
          <span className="tracking-[-0.2px]">Home</span>
          <svg className="mr-[7px] ml-[10px]" width="6" height="9" viewBox="0 0 6 9">
            <path d="M1 .5l4 4-4 4" fill="none" stroke="#888" strokeWidth="1.200" />
          </svg>
          <span className="text-[#2377c6]">Contact us</span>
        </div>
      </div>
      <main className="mx-auto flex h-[714px] w-[1170px] justify-between">
        <ContactForm />
        <section className="pt-[78px]">
          <h2 className="mb-[10px] text-[21px] leading-[29px] font-bold tracking-[0.55px] text-[#303030]">Bản đồ googlemap</h2>
          <StreetMap />
        </section>
      </main>
      <Footer />
      <div className="h-[50px] bg-[#303030]">
        <div className="relative mx-auto h-full w-[1170px]">
          <p className="pt-[18px] text-[15px] leading-5 tracking-[-0.53px] text-[#ededed]">© 2019 Copyright by Ltravel.com.vn . Thiết kế website và SEO - Tất Thành</p>
          <div className="absolute right-0 bottom-0 flex h-[27px] w-[194px] items-center rounded-t-[5px] bg-[#2d7fc7] px-[13px] pt-[9px] font-['Roboto',sans-serif] text-[15px] text-white">
            <FaComments size={15} />
            <span className="ml-[3px] flex-1 tracking-[-0.5px] whitespace-nowrap">Chat với chúng tôi</span>
            <FaCaretDown size={16} />
          </div>
        </div>
      </div>
    </div>
  );
}
